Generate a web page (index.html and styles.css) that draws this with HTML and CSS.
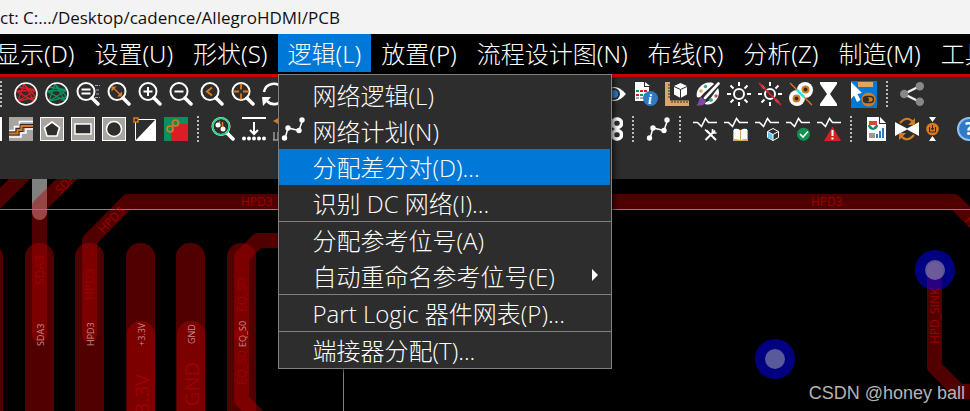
FILE: index.html
```html
<!DOCTYPE html>
<html lang="zh-CN">
  <head>
    <meta charset="utf-8" />
    <title>Allegro PCB</title>
    <link rel="stylesheet" href="styles.css">
  </head>
  <body>
    <!-- shared icon parts -->
    <svg class="defs" aria-hidden="true">
      <symbol id="lens" viewBox="0 0 24 24">
        <circle cx="10" cy="9.5" r="8.5" fill="none" stroke="#fff" stroke-width="2" />
        <path d="M16 16L22 22" stroke="#fff" stroke-width="3.5" stroke-linecap="round" />
      </symbol>
      <symbol id="wave" viewBox="0 0 24 24">
        <path d="M0 5.5H4.5L8.5 9.5 12.5 1.5 15.5 5.5H24" fill="none" stroke="#fff" stroke-width="1.6" />
      </symbol>
      <symbol id="nodes" viewBox="0 0 24 24">
        <path d="M4 21.5L7 11 18 13.5 21.5 3" fill="none" stroke="#fff" stroke-width="1.5" />
        <g fill="#fff">
          <circle cx="3.5" cy="21" r="2.7" /><circle cx="7" cy="11" r="2.7" />
          <circle cx="18" cy="13.5" r="2.7" /><circle cx="21" cy="3" r="2.7" />
        </g>
      </symbol>
      <symbol id="web" viewBox="0 0 24 24">
        <path d="M4 19L10 2 20 19 2 9 22 8 4 19 22 15 10 2M4 5L22 8" fill="none" stroke="currentColor" stroke-width="1.3" />
        <circle cx="12" cy="12" r="11" fill="none" stroke="#fff" stroke-width="1.6" />
      </symbol>
    </svg>

    <header class="titlebar">ct: C:.../Desktop/cadence/AllegroHDMI/PCB</header>

    <nav class="menubar">
      <div class="menu"><button type="button">显示(D)</button></div>
      <div class="menu"><button type="button">设置(U)</button></div>
      <div class="menu"><button type="button">形状(S)</button></div>
      <div class="menu open">
        <button type="button" aria-expanded="true">逻辑(L)</button>
        <ul class="dropdown">
          <li><button type="button">网络逻辑(L)</button></li>
          <li><button type="button"><svg class="item-icon" viewBox="0 0 24 24"><use href="#nodes" /></svg>网络计划(N)</button></li>
          <li><button type="button" class="selected">分配差分对(D)...</button></li>
          <li><button type="button">识别 DC 网络(I)...</button></li>
          <li class="group"><button type="button">分配参考位号(A)</button></li>
          <li><button type="button">自动重命名参考位号(E)<svg class="arrow" viewBox="0 0 6 12"><path d="M0 0L6 6 0 12z" fill="#fff" /></svg></button></li>
          <li class="group"><button type="button">Part Logic 器件网表(P)...</button></li>
          <li class="group"><button type="button">端接器分配(T)...</button></li>
        </ul>
      </div>
      <div class="menu"><button type="button">放置(P)</button></div>
      <div class="menu"><button type="button">流程设计图(N)</button></div>
      <div class="menu"><button type="button">布线(R)</button></div>
      <div class="menu"><button type="button">分析(Z)</button></div>
      <div class="menu"><button type="button">制造(M)</button></div>
      <div class="menu"><button type="button">工具(T)</button></div>
    </nav>

    <section class="toolbar">
      <div class="tools">
        <span class="sep"></span>
        <button type="button" class="unrats" aria-label="Unrats all"><svg viewBox="0 0 24 24"><use href="#web" /></svg></button>
        <button type="button" class="rats" aria-label="Rats all"><svg viewBox="0 0 24 24"><use href="#web" /></svg></button>
        <button type="button" aria-label="Zoom fit"><svg viewBox="0 0 24 24"><path d="M19 3.5h5M20 8h4M20 12h4M19 15.5h5" stroke="#aaa" stroke-dasharray="3 1" /><use href="#lens" /><path d="M5.5 7.5h9M5.5 11.5h9" stroke="#fff" stroke-width="1.8" /></svg></button>
        <button type="button" aria-label="Zoom points"><svg viewBox="0 0 24 24"><use href="#lens" /><path d="M6 5.5L14 13.5" stroke="#d67b22" stroke-width="1.5" /><path d="M4.5 4.5h5l-5 5zM15 14.5h-5l5-5z" fill="#d67b22" /></svg></button>
        <button type="button" aria-label="Zoom in"><svg viewBox="0 0 24 24"><use href="#lens" /><path d="M5.5 9.5h9M10 5v9" stroke="#fff" stroke-width="2" /></svg></button>
        <button type="button" aria-label="Zoom out"><svg viewBox="0 0 24 24"><use href="#lens" /><path d="M5.5 9.5h9" stroke="#fff" stroke-width="2" /></svg></button>
        <button type="button" aria-label="Zoom previous"><svg viewBox="0 0 24 24"><use href="#lens" /><path d="M12 5.5L7 9.5 12 13.5" fill="none" stroke="#d67b22" stroke-width="2" /></svg></button>
        <button type="button" aria-label="Zoom center"><svg viewBox="0 0 24 24"><use href="#lens" /><path d="M2 9.5h6M12 9.5h6M10 1.5v6M10 11.5v6" stroke="#d67b22" stroke-width="1.8" /></svg></button>
        <button type="button" aria-label="Redraw"><svg viewBox="0 0 24 24"><g fill="none" stroke="#fff" stroke-width="2.6"><path d="M2 10A10 10 0 0 1 20 6" /><path d="M22 14A10 10 0 0 1 5 19" /></g><path d="M0 15h9l-8 9z" fill="#fff" /></svg></button>
        <span class="hidden-tools top"></span>
        <button type="button" aria-label="Visibility"><svg viewBox="0 0 24 24"><path d="M0 12Q11-2 23 12 11 26 0 12z" fill="#fff" /><circle cx="11" cy="12" r="6" fill="#2d2d2d" /><circle cx="11" cy="12" r="4" fill="#2f7fcf" /></svg></button>
        <button type="button" aria-label="Report"><svg viewBox="0 0 24 24"><path d="M1 0h9v5h5v14H1z" fill="#fff" /><path d="M11 0l5 4h-5z" fill="#fff" /><g stroke-width="2" stroke-dasharray="3 1"><path d="M2 9h3M6 13h7" stroke="#0b9560" /><path d="M2 13h3M6 9h7" stroke="#d81f26" /><path d="M2 16h11" stroke="#aaa" /></g><circle cx="16.5" cy="16.5" r="7.5" fill="#2f7ac5" /><text x="14" y="22" class="glyph-info">i</text></svg></button>
        <button type="button" aria-label="Dimension"><svg viewBox="0 0 24 24"><path d="M0 0h5v18.5h19V24H0z" fill="#d9a962" /><path d="M3 3h2M3 6h2M3 9h2M3 12h2M3 15h2M7 19v2M10 19v2M13 19v2M16 19v2M19 19v2M22 19v2" stroke="#2d2d2d" /><path d="M15.5 1L22 4v8.5L15.5 16 9 12.5V4z" fill="#fff" /><path d="M9 4.5l6.5 3 6.5-3M15.5 7.5V16" stroke="#2d2d2d" fill="none" /></svg></button>
        <button type="button" aria-label="Color"><svg viewBox="0 0 24 24"><path d="M17 1C6-2-1 9 1 15 4 17 7 12 8 11L18 2z" fill="#fff" /><path d="M22 6C26 15 17 25 9 22c0-3 5-2 5-5z" fill="#fff" /><circle cx="5" cy="9" r="1.8" fill="#d9a962" /><circle cx="9.5" cy="4.5" r="1.8" fill="#4a8" /><circle cx="20" cy="14" r="1.7" fill="#b55" /><circle cx="15" cy="18" r="2" fill="#4a8" /><path d="M22.5 1.5L9 16" stroke="#2d2d2d" stroke-width="4.5" /><path d="M22.5 1.5L9 16" stroke="#fff" stroke-width="2.6" stroke-linecap="round" /><path d="M5 15l5 4c-1 5-6 5-10 4 4-2 2-6 5-8z" fill="#7d4aa5" /></svg></button>
        <button type="button" aria-label="Shadow on"><svg viewBox="0 0 24 24"><circle cx="12" cy="12" r="5" fill="none" stroke="#fff" stroke-width="2" /><path d="M12 0v4M12 20v4M0 12h4M20 12h4M3.5 3.5l3 3M17.5 17.5l3 3M20.5 3.5l-3 3M6.5 17.5l-3 3" stroke="#fff" stroke-width="2" /></svg></button>
        <button type="button" aria-label="Shadow off"><svg viewBox="0 0 24 24"><circle cx="12" cy="12" r="5" fill="none" stroke="#fff" stroke-width="2" /><path d="M12 0v4M12 20v4M0 12h4M20 12h4M3.5 3.5l3 3M17.5 17.5l3 3M20.5 3.5l-3 3M6.5 17.5l-3 3" stroke="#fff" stroke-width="2" /><path d="M1 1l22 22" stroke="#d81f26" stroke-width="1.8" /></svg></button>
        <button type="button" aria-label="Unroute"><svg viewBox="0 0 24 24"><circle cx="16" cy="8" r="8" fill="#fff" /><circle cx="8" cy="16" r="8" fill="#fff" /><circle cx="16.5" cy="7.5" r="3" fill="#2d2d2d" stroke="#d67b22" stroke-width="2" /><circle cx="7.5" cy="16.5" r="3" fill="#2d2d2d" stroke="#d67b22" stroke-width="2" /><path d="M1 1l22 22" stroke="#d67b22" stroke-width="1.3" /><path d="M8 8l7 7" stroke="#1fe6e6" stroke-width="2.5" /></svg></button>
        <button type="button" aria-label="Wait"><svg viewBox="0 0 24 24"><path d="M0 0h17v2L10 12l7 10v2H0v-2L7 12 0 2z" fill="#fff" /></svg></button>
        <button type="button" class="active" aria-label="Select mode"><svg viewBox="0 0 26 27"><path d="M7 1h15v5H7z" fill="#d9a962" /><circle cx="17.5" cy="18.5" r="7" fill="#d67b22" /><rect x="12.5" y="15.5" width="10" height="6" rx="3" fill="#d67b22" stroke="#2d2d2d" stroke-width="1.5" /><circle cx="15.5" cy="18.5" r="2.5" fill="#2d2d2d" /><path d="M0 1l11 11-4.5 1 3 6-3.5 2-3-6.5L0 18z" fill="#fff" /></svg></button>
        <span class="sep"></span>
        <button type="button" aria-label="Share"><svg viewBox="0 0 24 24"><path d="M20 4L4 12l16 8" fill="none" stroke="#eee" stroke-width="2.5" /><g fill="#888"><circle cx="19.8" cy="4.2" r="4.2" /><circle cx="4.2" cy="12" r="4.2" /><circle cx="19.8" cy="19.8" r="4.2" /></g></svg></button>
      </div>

      <div class="tools shifted">
        <button type="button" aria-label="Shape edit"><svg viewBox="0 0 24 24"><rect width="24" height="24" fill="#fff" /></svg></button>
        <button type="button" aria-label="Slide"><svg viewBox="0 0 24 24"><rect width="24" height="24" fill="#a8a4a0" /><path d="M0 13.5h5.5v-4h5v-5H24M0 20h12v-4h5v-4h7" fill="none" stroke="#fff" stroke-width="1.5" /><path d="M0 16.5h8.5v-3.5h4V9H24" fill="none" stroke="#2d2d2d" stroke-width="4" /><path d="M0 16.5h8.5v-3.5h4V9H24" fill="none" stroke="#d67b22" stroke-width="2" /></svg></button>
        <button type="button" aria-label="Polygon"><svg viewBox="0 0 24 24"><rect x=".5" y=".5" width="23" height="23" fill="#a8a4a0" stroke="#fff" /><path d="M12 5l7.5 5.5-2.5 8.5H7L4.5 10.5z" fill="#2d2d2d" stroke="#fff" stroke-width="1.6" /></svg></button>
        <button type="button" aria-label="Rectangle"><svg viewBox="0 0 24 24"><rect x=".5" y=".5" width="23" height="23" fill="#a8a4a0" stroke="#fff" /><rect x="4" y="7" width="16" height="10" fill="#2d2d2d" stroke="#fff" stroke-width="1.5" /></svg></button>
        <button type="button" aria-label="Circle"><svg viewBox="0 0 24 24"><rect x=".5" y=".5" width="23" height="23" fill="#a8a4a0" stroke="#fff" /><circle cx="12" cy="12" r="7.5" fill="#2d2d2d" stroke="#fff" stroke-width="1.5" /></svg></button>
        <button type="button" aria-label="Void"><svg viewBox="0 0 24 24"><path d="M23 2v22H2z" fill="#fff" /><path d="M3 2.5h19.5M2.5 3v20" stroke="#fff" /><rect x="1" y="1" width="4" height="4" fill="#2d2d2d" stroke="#d67b22" stroke-width="1.5" /></svg></button>
        <button type="button" aria-label="Island"><svg viewBox="0 0 24 24"><rect width="24" height="24" fill="#0b8f5c" /><path d="M7 24V12l8-5h9v17z" fill="#d81f26" /><path d="M8 10l2-2" stroke="#d67b22" stroke-width="1.5" /><circle cx="11.5" cy="6" r="3" fill="#0b8f5c" stroke="#d67b22" stroke-width="1.7" /><circle cx="6" cy="12" r="3" fill="#0b8f5c" stroke="#d67b22" stroke-width="1.7" /></svg></button>
        <span class="sep"></span>
        <button type="button" aria-label="Inspect"><svg viewBox="0 0 24 24"><use href="#lens" /><circle cx="10" cy="9.5" r="8.3" fill="none" stroke="#24d07e" stroke-width="1.8" /><path d="M8.5 4v6M11.5 5v6" stroke="#d67b22" stroke-width="1.5" /><circle cx="7" cy="8" r="2.5" fill="#fff" /><circle cx="12" cy="12" r="2.5" fill="#fff" /></svg></button>
        <button type="button" aria-label="Drill"><svg viewBox="0 0 24 24"><path d="M0 1h24M12 5v12M8 13l4 4 4-4" fill="none" stroke="#fff" stroke-width="2" /><path d="M2 21.5h22" stroke="#fff" stroke-width="4" stroke-linecap="round" stroke-dasharray="0 5" /></svg></button>
        <button type="button" aria-label="Swap"><svg viewBox="0 0 24 24"><path d="M7 0v8L0 4zM7 3h6v2H7z" fill="#d67b22" /><path d="M1 15v8M5 15v8M0 23h7" stroke="#ccc" fill="none" /></svg></button>
        <span class="hidden-tools bottom"></span>
        <button type="button" aria-label="Copy"><svg viewBox="0 0 24 24"><g fill="none" stroke="#fff" stroke-width="3.5"><rect x="13.5" y="2" width="9" height="8.5" rx="4" /><rect x="13.5" y="13.5" width="9" height="8.5" rx="4" /></g></svg></button>
        <span class="sep"></span>
        <button type="button" aria-label="Net schedule"><svg viewBox="0 0 24 24"><use href="#nodes" /></svg></button>
        <span class="sep"></span>
        <button type="button" aria-label="Signal setup"><svg viewBox="0 0 24 24"><use href="#wave" /><path d="M13.5 13.5L23 23M22 13.5L12.5 23" stroke="#fff" stroke-width="2" /><path d="M19.5 12v4h4M12 12.5l3 3" fill="none" stroke="#fff" stroke-width="1.6" /></svg></button>
        <button type="button" aria-label="Signal library"><svg viewBox="0 0 24 24"><use href="#wave" /><path d="M9 13v11h15V13" fill="#d9a962" /><path d="M10 12q4-1 6 1v10q-2-1-6-1zM23 12q-4-1-6 1v10q2-1 6-1z" fill="#fff" /></svg></button>
        <button type="button" aria-label="Signal model"><svg viewBox="0 0 24 24"><use href="#wave" /><path d="M18 11.5l5.5 3v6L18 23.5l-5.5-3v-6z" fill="#2d2d2d" stroke="#fff" /><path d="M13 15l5 2.5V23l-5-2.5z" fill="#5bc8f5" /><path d="M12.5 14.5L18 17.5l5.5-3M18 17.5v6" fill="none" stroke="#fff" /></svg></button>
        <button type="button" aria-label="Signal audit"><svg viewBox="0 0 24 24"><use href="#wave" /><circle cx="17.5" cy="17.2" r="6.5" fill="#109150" /><path d="M14 17l3 3 5-5.5" fill="none" stroke="#fff" stroke-width="1.6" /></svg></button>
        <button type="button" aria-label="Signal errors"><svg viewBox="0 0 24 24"><use href="#wave" /><path d="M15.5 9.5L24 24H7z" fill="#d81f26" /><path d="M15.5 13v6M15.5 20.5v2" stroke="#fff" stroke-width="2" /></svg></button>
        <span class="sep"></span>
        <button type="button" aria-label="Design report"><svg viewBox="0 0 24 24"><path d="M3 0h12v7h7v17H3z" fill="#fff" /><path d="M16 0l6 6h-6z" fill="#fff" /><path d="M5 4h8v4H5z" fill="#d84a32" /><path d="M4 8h10a5 5 0 0 1-10 0z" fill="#0b8f5c" /><path d="M6 8h6l-3 3z" fill="#fff" /><path d="M5 16h6v5H5z" fill="#999" /><path d="M13 21v-4M16 21v-7M19 21V11" stroke="#2f7ac5" stroke-width="2" /></svg></button>
        <button type="button" aria-label="Refresh symbols"><svg viewBox="0 0 24 24"><path d="M0 5l12 6.5L24 5v14l-12-6.5L0 19z" fill="#fff" /><g fill="none" stroke="#d67b22" stroke-width="2"><path d="M5 6q7-8 13-1M19 18q-7 8-13 1" /></g><path d="M20 1v7h-7zM4 23v-7h7z" fill="#d67b22" /></svg></button>
        <button type="button" aria-label="Import"><svg viewBox="0 0 24 24"><path d="M3 0h7L6.5 5zM3 24h7l-3.5-5z" fill="#fff" /><circle cx="6.5" cy="12" r="6.3" fill="#d67b22" /><path d="M3.5 10v5h6v-5M6.5 8v5M5 11l1.5 2L8 11" fill="none" stroke="#2d2d2d" /></svg></button>
        <button type="button" aria-label="Help"><svg viewBox="0 0 24 24"><circle cx="12" cy="12" r="11" fill="#2f7ac5" stroke="#8fc0ee" stroke-width="2" /><text x="8" y="18" class="glyph-help">?</text></svg></button>
      </div>
    </section>

    <main class="board">
      <svg class="layout">
        <rect x="32" y="0" width="15" height="33" fill="#808080" />
        <circle cx="39.5" cy="33.5" r="7.5" fill="#808080" />

        <!-- pads -->
        <g class="copper">
          <rect x="-26" y="64" width="29" height="400" rx="14" />
          <rect x="25" y="64" width="29" height="400" rx="14" />
          <rect x="75" y="64" width="29" height="400" rx="14" />
          <rect x="126" y="64" width="29" height="400" rx="14" />
          <rect x="176" y="64" width="29" height="400" rx="14" />
          <rect x="227" y="64" width="29" height="400" rx="14" />
          <rect x="127" y="142" width="28" height="400" rx="14" />
          <rect x="177" y="142" width="28" height="400" rx="14" />
          <path d="M9 0H30L0 30V9z" />
        </g>

        <!-- traces -->
        <g class="trace">
          <path d="M76-9L39.5 27V156" />
          <path d="M89.5 156V61.5L128 22.5H954L1000 68" />
          <path d="M300 61.5H258L241.5 78V221L270 249" />
          <path d="M934.5 91V188L959 212.5H1000" />
        </g>
        <circle cx="241.5" cy="155" r="7" fill="#900000" />

        <!-- vias -->
        <g class="via">
          <circle cx="935" cy="91" r="20" /><circle cx="775" cy="180" r="20" />
        </g>
        <g class="hole">
          <circle cx="935" cy="91" r="10" /><circle cx="775" cy="180" r="10" />
        </g>

        <path d="M0 30.5H3000M343.5 30V1000" stroke="#808080" />

        <g class="net">
          <text x="241" y="27">HPD3</text>
          <text x="811" y="27">HPD3</text>
          <text transform="translate(60 16) rotate(-45)">SDA3</text>
          <text transform="translate(103 55) rotate(-45)">HPD3</text>
          <text transform="translate(964 42) rotate(45)">HPD3</text>
          <text transform="translate(44 106) rotate(-90)">SDA3</text>
          <text transform="translate(94 121) rotate(-90)">HPD3</text>
          <text transform="translate(246 133) rotate(-90)">EQ_S0</text>
          <text transform="translate(246 206) rotate(-90)">EQ_S0</text>
          <text transform="translate(939 165) rotate(-90)">HPD_SINK</text>
        </g>
        <g class="net big">
          <text transform="translate(149 195) rotate(-90)" text-anchor="end">+3.3V</text>
          <text transform="translate(199 183) rotate(-90)" text-anchor="end">GND</text>
        </g>
        <g class="pin">
          <text transform="translate(44 167) rotate(-90)">SDA3</text>
          <text transform="translate(94 167) rotate(-90)">HPD3</text>
          <text transform="translate(145 167) rotate(-90)">+3.3V</text>
          <text transform="translate(195 165) rotate(-90)">GND</text>
          <text transform="translate(246 168) rotate(-90)">EQ_S0</text>
        </g>
      </svg>
      <span class="watermark">CSDN @honey ball</span>
    </main>
  </body>
</html>
```

FILE: styles.css
```css
* {
  box-sizing: border-box;
}

body {
  margin: 0;
  min-height: 100vh;
  display: flex;
  flex-direction: column;
  overflow: hidden;
  background-color: #000;
  color: #fff;
  font-family: "Open Sans", "Noto Sans CJK SC", sans-serif;
}

button {
  padding: 0;
  border: none;
  background: none;
  color: inherit;
  font: inherit;
  white-space: nowrap;
}

.defs {
  position: absolute;
  width: 0;
  height: 0;
}

.titlebar {
  height: 34px;
  line-height: 36px;
  background-color: #f3f3f3;
  color: #111;
  font-size: 17px;
  white-space: nowrap;
}

/* menu bar */
.menubar {
  display: flex;
  height: 43px;
  margin-left: -14px;
  border-bottom: 3px solid #cc0000;
  font-family: "Noto Sans", "Noto Sans CJK SC", sans-serif;
  font-size: 24px;
  font-weight: 300;
}

.menu {
  position: relative;
  flex: none;
  height: 38px;
}

.menu > button {
  height: 38px;
  padding: 2px 10px 0;
  line-height: 36px;
}

.menu.open {
  background-color: #0078d7;
}

.dropdown {
  position: absolute;
  z-index: 2;
  top: 40px;
  left: 0;
  width: 334px;
  margin: 0;
  padding: 2px 1px 0 0;
  list-style: none;
  background-color: #2d2d2d;
  border: 1px solid #808080;
  box-shadow: 3px 3px 4px rgba(0, 0, 0, 0.5);
  font-family: "Open Sans", "Noto Sans CJK SC", sans-serif;
}

.dropdown button {
  position: relative;
  display: block;
  width: 100%;
  height: 36px;
  padding: 2px 0 0 34px;
  line-height: 34px;
  text-align: left;
}

.dropdown .selected {
  background-color: #0078d7;
}

.dropdown .group {
  margin-right: -1px;
  border-top: 1px solid #808080;
}

.item-icon {
  position: absolute;
  top: 4px;
  left: 2px;
  width: 24px;
  height: 24px;
}

.arrow {
  position: absolute;
  top: 11px;
  right: 12px;
  width: 6px;
  height: 12px;
}

/* toolbars */
.toolbar {
  height: 102px;
  padding-top: 3px;
  overflow: hidden;
  background-color: #2d2d2d;
}

.tools {
  display: flex;
  align-items: center;
  gap: 7px;
  height: 28px;
  margin-bottom: 7px;
}

.tools.shifted {
  margin-left: -22px;
}

.tools button {
  flex: none;
  width: 24px;
  height: 24px;
}

.tools svg {
  display: block;
  width: 100%;
  height: 100%;
}

.tools .active {
  width: 26px;
  height: 27px;
  background-color: #0078d7;
}

.unrats {
  color: #d81f26;
}

.tools .unrats {
  color: #d81f26;
}

.tools .rats {
  color: #0b9560;
}

.sep {
  flex: none;
  width: 2px;
  height: 26px;
  margin: 0 5px 0 2px;
  background: repeating-linear-gradient(#bbb 0 2px, transparent 2px 4px);
}

.sep:first-child {
  margin-left: 0;
}

/* tools that sit behind the open menu */
.hidden-tools {
  flex: none;
}

.hidden-tools.top {
  width: 303px;
}

.hidden-tools.bottom {
  width: 288px;
}

.glyph-info {
  fill: #fff;
  font: italic bold 14px "Liberation Serif", serif;
}

.glyph-help {
  fill: #fff;
  font: bold 17px "Open Sans", sans-serif;
}

/* board */
.board {
  position: relative;
  flex: 1;
  overflow: hidden;
}

.layout {
  position: absolute;
  width: 100%;
  height: 100%;
}

.copper {
  fill: #b40000;
}

.copper > * {
  opacity: 0.45;
}

.trace {
  fill: none;
  stroke: #b40000;
  stroke-width: 15px;
  stroke-linecap: round;
  stroke-linejoin: round;
}

.trace path {
  opacity: 0.45;
}

.via {
  fill: #0000ff;
  opacity: 0.5;
}

.hole {
  fill: #a4a4b2;
  opacity: 0.55;
}

.net {
  fill: #9c0000;
  font: 12px "Open Sans", sans-serif;
}

.net.big {
  font-size: 20px;
}

.pin {
  fill: #c09090;
  font: 9px "Open Sans", sans-serif;
}

.watermark {
  position: absolute;
  right: 5px;
  bottom: 8px;
  color: #b4b4b4;
  font-family: "Liberation Sans", sans-serif;
  font-size: 18px;
  line-height: 20px;
}
```
